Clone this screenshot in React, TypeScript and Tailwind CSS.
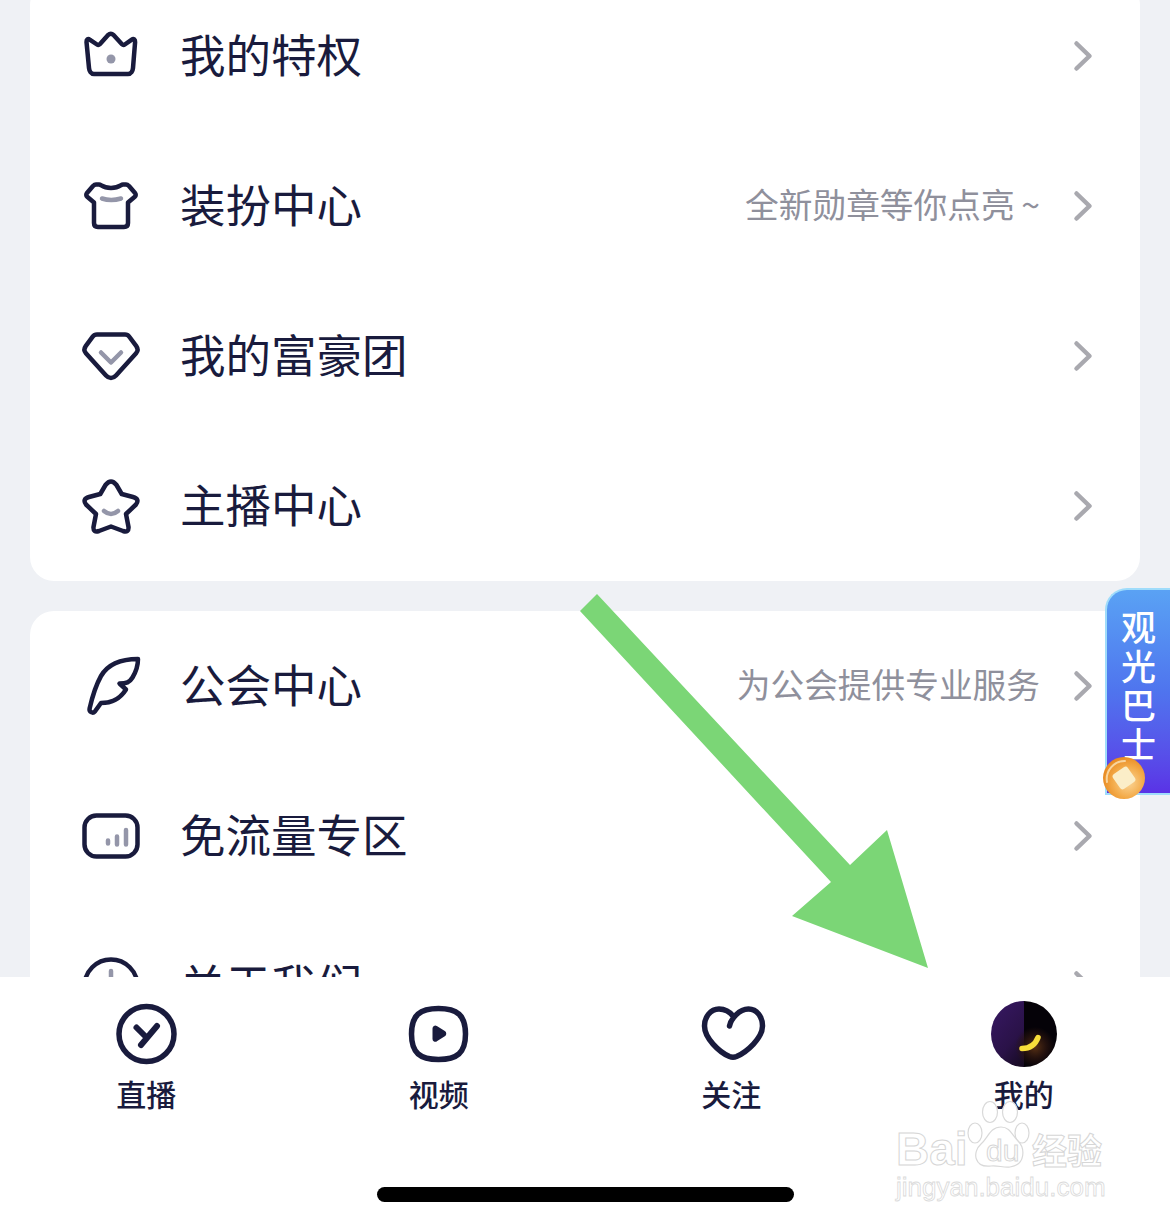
/**
 * App - profile menu screen with the bottom tab bar and a pointer arrow on top
 */

import type { ReactNode } from 'react';

const NAVY = '#191b3d';
const GREY = '#9496a9';

function Icon({ children }: { children: ReactNode }) {
  return (
    <svg
      width="60"
      height="60"
      viewBox="0 0 60 60"
      fill="none"
      stroke={NAVY}
      strokeWidth="4.5"
      strokeLinecap="round"
      strokeLinejoin="round"
      className="shrink-0 overflow-visible"
    >
      {children}
    </svg>
  );
}

function Chevron() {
  return (
    <svg width="20" height="32" viewBox="0 0 20 32" fill="none" stroke="#a9a9af" strokeWidth="4.5" strokeLinecap="round" strokeLinejoin="round" className="shrink-0">
      <path d="M3.5 3.5L16.5 16 3.5 28.5" />
    </svg>
  );
}

function Row({ icon, title, note }: { icon: ReactNode; title: string; note?: string }) {
  return (
    <div className="flex h-[150px] items-center pl-[51px] pr-[47px]">
      <Icon>{icon}</Icon>
      <span className="ml-[39px] pb-[4px] text-[45.5px] leading-none text-[#191b3d]">{title}</span>
      <div className="ml-auto flex items-center gap-[33px]">
        {note && <span className="pb-[4px] text-[33.7px] leading-none text-[#8f909c]">{note}</span>}
        <Chevron />
      </div>
    </div>
  );
}

function Tab({ icon, label }: { icon: ReactNode; label: string }) {
  return (
    <div className="flex flex-col items-center">
      <div className="flex h-[66px] items-center">{icon}</div>
      <span className="mt-[8px] text-[30px] font-medium leading-[36px] text-[#191b3d]">{label}</span>
    </div>
  );
}

function TabSvg({ children }: { children: ReactNode }) {
  return (
    <svg width="60" height="60" viewBox="0 0 60 60" fill="none" stroke={NAVY} strokeWidth="5.5" strokeLinecap="round" strokeLinejoin="round" className="overflow-visible">
      {children}
    </svg>
  );
}

function Avatar() {
  return (
    <svg width="66" height="66" viewBox="0 0 66 66">
      <defs>
        <linearGradient id="avatarLeft" x1="0.3" y1="0" x2="0.9" y2="1">
          <stop offset="0" stopColor="#35175f" />
          <stop offset="0.6" stopColor="#2a1248" />
          <stop offset="1" stopColor="#170b22" />
        </linearGradient>
        <radialGradient id="avatarGlow" cx="44" cy="46" r="20" gradientUnits="userSpaceOnUse">
          <stop offset="0" stopColor="#5a3214" />
          <stop offset="0.6" stopColor="#2c150f" stopOpacity="0.7" />
          <stop offset="1" stopColor="#2c150f" stopOpacity="0" />
        </radialGradient>
        <clipPath id="avatarClip">
          <circle cx="33" cy="33" r="33" />
        </clipPath>
      </defs>
      <g clipPath="url(#avatarClip)">
        <rect width="33" height="66" fill="url(#avatarLeft)" />
        <rect x="33" width="33" height="66" fill="#050208" />
        <rect width="66" height="66" fill="url(#avatarGlow)" />
      </g>
      <path d="M31 47.5c7 0 13-3 16-11" fill="none" stroke="#f8de3a" strokeWidth="5.5" strokeLinecap="round" />
    </svg>
  );
}

function Watermark() {
  const outline = 'text-white [-webkit-text-stroke:1px_#d6d6d6]';
  return (
    <div className="absolute left-[896px] top-[1100px] h-[100px] w-[212px] font-['Liberation_Sans',sans-serif]">
      <span className={`absolute left-0 top-[24px] text-[46px] font-bold leading-[50px] ${outline}`}>Bai</span>
      <svg width="70" height="70" viewBox="0 0 70 70" fill="#ffffff" stroke="#d9d9d9" strokeWidth="1.2" className="absolute left-[68px] top-0">
        <ellipse cx="26" cy="12" rx="7.5" ry="10.5" />
        <ellipse cx="46" cy="12" rx="7.5" ry="10.5" />
        <ellipse cx="11" cy="33" rx="7" ry="10" />
        <ellipse cx="58" cy="33" rx="7" ry="10" />
        <path d="M37 27c9 0 11 8 17 14 7 7 8 24-8 26-6 1-13-2-19-1C10 68 8 52 17 44c7-6 9-17 20-17z" />
      </svg>
      <span className={`absolute left-[90px] top-[34px] text-[30px] leading-[34px] ${outline}`}>du</span>
      <span className={`absolute left-[136px] top-[28px] font-['Noto_Sans_CJK_SC',sans-serif] text-[35px] font-bold leading-[42px] ${outline}`}>经验</span>
      <span className="absolute left-0 top-[73px] text-[26px] leading-[28px] text-white [-webkit-text-stroke:0.8px_#dadada]">jingyan.baidu.com</span>
    </div>
  );
}

export default function App() {
  return (
    <div className="relative flex h-[1226px] w-full flex-col overflow-hidden bg-white font-['Noto_Sans_CJK_SC',sans-serif]">
      <main className="h-[977px] shrink-0 overflow-hidden bg-[#eff1f5] px-[30px]">
        <div className="-mt-[19px] rounded-[24px] bg-white">
          <Row
            title="我的特权"
            icon={
              <>
                <path d="M5.5 16c-.2-2.5 1.5-3.6 3.2-2.4L16 18.5c1 .7 2 .5 2.8-.3l8.5-9.4c1.5-1.5 3.5-1.5 5 0l8.7 9.4c.8.8 1.8 1 2.8.3l7-4.9c1.800-1.200 3.500 0 3.300 2.400L52 42c-.3 3-2 6-5 6H13c-3 0-4.700-3-5-6z" />
                <circle cx="30" cy="33" r="4.5" fill={GREY} stroke="none" />
              </>
            }
          />
          <Row
            title="装扮中心"
            note={'全新勋章等你点亮\u2009~'}
            icon={
              <>
                <path d="M15 8.5h3c2.5 0 3 3.5 12 3.5s9.5-3.5 12-3.5h3c1.3 0 2 .5 3 1.5l6 7c1 1.2 1 2.8-.2 3.800L47 26.500V47c0 2.500-1.500 4-4 4H17c-2.500 0-4-1.500-4-4V26.500l-6.800-5.700c-1.200-1-1.200-2.600-.2-3.800L12 10c1-1 1.700-1.500 3-1.500z" />
                <path d="M21 22.5q9 3 19 0" stroke={GREY} />
              </>
            }
          />
          <Row
            title="我的富豪团"
            icon={
              <>
                <path d="M16 8.5h28c2 0 3.300.8 4.300 2.200l7 9.500c1.900 2.600 1.800 4.800-.2 7L35 49.500c-3 3.300-7 3.300-10 0L4.900 27.200c-2-2.200-2.100-4.400-.2-7l7-9.500c1-1.400 2.300-2.200 4.300-2.200z" />
                <path d="M20 26.5l10 10 10-10" stroke={GREY} />
              </>
            }
          />
          <Row
            title="主播中心"
            icon={
              <>
                <path d="M24.5 9Q30 2 35.5 9L40.7 18 52 21Q59 23 55 28.5L45 38 47.5 51Q48 57 42 55L30 50.5 18 55Q12 57 12.5 51L15 38 5 28.5Q1 23 8 21L19.3 18Z" />
                <path d="M23 35q7 6 14 0" stroke={GREY} />
              </>
            }
          />
        </div>

        <div className="mt-[30px] rounded-[24px] bg-white">
          <Row
            title="公会中心"
            note="为公会提供专业服务"
            icon={<path d="M57 3C40 3 27 8 20 20 15 29 11 42 8.6 52.5c-.7 3.3 3 5.500 5.300 3L20 47c7 0 17-1 25-13.500l-6.500-6c7 0 10-1 13-6 3-5 5.500-10 5.500-18.500z" />}
          />
          <Row
            title="免流量专区"
            icon={
              <>
                <rect x="3.5" y="9.5" width="53" height="41" rx="12" />
                <path d="M27 37.5v-3M36 38.5v-8M45 38.5V24" stroke={GREY} strokeWidth="4.5" />
              </>
            }
          />
          <Row
            title="关于我们"
            icon={
              <>
                <circle cx="30" cy="30" r="26.5" />
                <path d="M30 15v8" stroke={GREY} />
                <path d="M30 30v13" stroke={GREY} />
              </>
            }
          />
        </div>
      </main>

      <footer className="flex flex-1 flex-col bg-white pt-[24px]">
        <div className="grid grid-cols-4">
          <Tab
            label="直播"
            icon={
              <TabSvg>
                <circle cx="30.5" cy="30" r="27.5" />
                <path d="M20.5 23.5l9 9M41 22L25 41" strokeWidth="6" />
              </TabSvg>
            }
          />
          <Tab
            label="视频"
            icon={
              <TabSvg>
                <path d="M29.5 4.5C48 4.5 56.5 11 56.5 30S48 55.5 29.5 55.5 2.5 49 2.5 30 11 4.5 29.5 4.5z" />
                <path d="M24.5 24.5c0-1.600 1.500-2.300 2.800-1.600l8 5c1.300.8 1.300 2.800 0 3.600l-8 5c-1.300.7-2.800 0-2.800-1.600z" fill={NAVY} stroke={NAVY} strokeWidth="2" />
              </TabSvg>
            }
          />
          <Tab
            label="关注"
            icon={
              <TabSvg>
                <path d="M28.5 22C30 15 38 5 47.5 5C56 5 61.5 13 61.5 22C61.5 34 46 48 35.5 52.5C33 53.5 31 53.5 28.5 52.5C18 48 3.5 34 3.5 22C3.5 13 9.5 5 18 5C24 5 29 8 32.5 12.5" />
              </TabSvg>
            }
          />
          <Tab label="我的" icon={<Avatar />} />
        </div>
        <div className="ml-[377px] mt-[76px] h-[15px] w-[417px] rounded-full bg-black" />
      </footer>

      {/* floating bus badge */}
      <div className="absolute right-0 top-[588px] flex h-[207px] w-[65px] justify-center rounded-tl-[22px] border-b-2 border-l-2 border-t-2 border-[#9fdcfb] bg-gradient-to-b from-[#5aa2f4] via-[#4f74ee] to-[#5a32e6] pt-[20px] font-medium text-white">
        <span className="text-[35px] leading-none tracking-[4px] [writing-mode:vertical-rl]">观光巴士</span>
      </div>
      <svg width="44" height="44" viewBox="0 0 44 44" className="absolute left-[1102px] top-[756px]">
        <defs>
          <radialGradient id="coin" cx="0.6" cy="0.6" r="0.62">
            <stop offset="0" stopColor="#fbd79a" />
            <stop offset="0.6" stopColor="#f3aa48" />
            <stop offset="1" stopColor="#e88a22" />
          </radialGradient>
        </defs>
        <circle cx="22" cy="22" r="21" fill="url(#coin)" />
        <path d="M5 26a18 18 0 0 1 18-21" fill="none" stroke="#fbe3b8" strokeWidth="2" strokeLinecap="round" opacity="0.8" />
        <rect x="13" y="13" width="18" height="18" rx="3" transform="rotate(-35 22 22)" fill="#fbeec8" />
      </svg>

      {/* green pointer arrow */}
      <svg width="1170" height="1226" viewBox="0 0 1170 1226" className="pointer-events-none absolute left-0 top-0">
        <polygon points="580,611 597,594 850,865 887,830 928,968 792,916 831,882" fill="#7bd676" />
      </svg>

      <Watermark />
    </div>
  );
}
